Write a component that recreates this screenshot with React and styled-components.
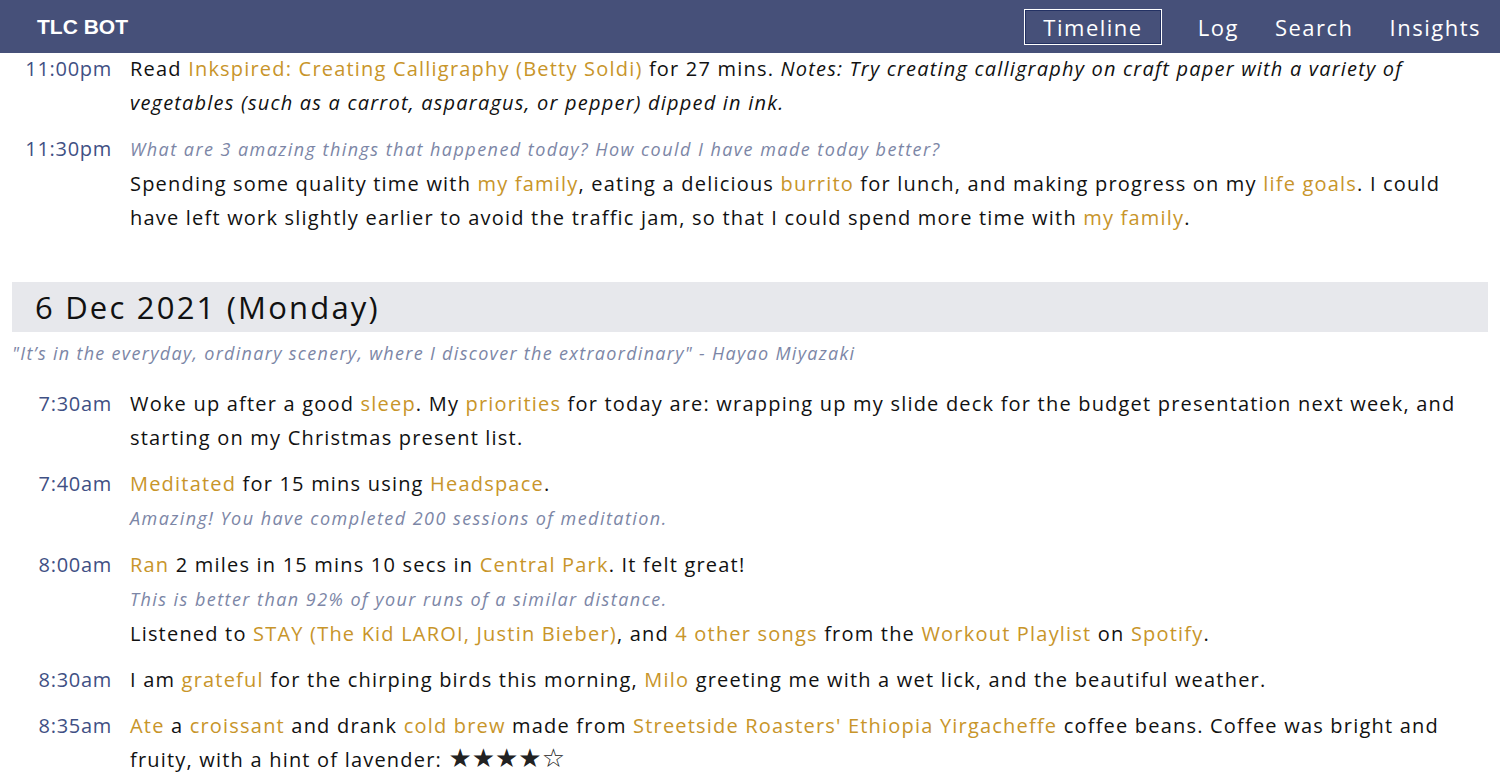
import React from "react";
import styled, { createGlobalStyle } from "styled-components";

const GlobalStyle = createGlobalStyle`
  body {
    margin: 0;
    background: #ffffff;
    font-family: "Open Sans", "Noto Sans", sans-serif;
  }
`;

const Nav = styled.nav`
  height: 53px;
  background: #465079;
  display: flex;
  align-items: center;
  justify-content: space-between;
  padding: 0 19px 0 37px;
`;

const Brand = styled.div`
  font-family: "Liberation Sans", Arial, sans-serif;
  font-weight: bold;
  font-size: 21px;
  color: #ffffff;
  margin-top: 1px;
`;

const Menu = styled.div`
  display: flex;
  align-items: center;
  gap: 36px;
`;

const NavItem = styled.div`
  font-size: 22px;
  letter-spacing: 1.5px;
  color: #ffffff;
  height: 36px;
  box-sizing: border-box;
  display: flex;
  align-items: center;
  padding: ${({ $active }) => ($active ? "0 18px" : "0")};
  border: ${({ $active }) => ($active ? "1px solid #ffffff" : "none")};
  box-shadow: ${({ $active }) => ($active ? "inset 0 0 0 1px #233163" : "none")};
`;

const Page = styled.main`
  padding: 0 12px 40px;
  margin-top: -1px;
`;

const Day = styled.section`
  margin-bottom: 47px;
`;

const DayHeader = styled.h2`
  margin: 0;
  height: 50px;
  display: flex;
  align-items: center;
  padding: 0 23px;
  background: #e7e8ec;
  font-weight: normal;
  font-size: 31px;
  letter-spacing: 2.2px;
  color: #111111;
`;

const Quote = styled.div`
  font-style: italic;
  font-size: 18px;
  letter-spacing: 1.3px;
  line-height: 34px;
  color: #7c86a6;
  margin-top: 4px;
  margin-bottom: 17px;
`;

const Row = styled.div`
  display: grid;
  grid-template-columns: 100px 1fr;
  column-gap: 18px;
  margin-bottom: 12px;
  padding-right: 20px;
`;

const Time = styled.div`
  text-align: right;
  font-size: 20px;
  letter-spacing: 0.7px;
  line-height: 34px;
  color: #3f5084;
`;

const Body = styled.div`
  display: flex;
  flex-direction: column;
`;

const Text = styled.div`
  font-size: 20px;
  letter-spacing: 1.2px;
  line-height: 34px;
  color: #111111;
`;

const Muted = styled.div`
  font-style: italic;
  font-size: 18px;
  letter-spacing: 1.45px;
  line-height: 35px;
  color: #7c86a6;
`;

const Notes = styled.span`
  font-style: italic;
`;

const Accent = styled.span`
  color: #c8952a;
`;

const Stars = styled.span`
  font-family: "DejaVu Sans", sans-serif;
  font-size: 26px;
  letter-spacing: 0;
  line-height: 20px;
  color: #222222;
`;

const L = ({ children }) => <Accent>{children}</Accent>;

const before = [
  {
    time: "11:00pm",
    lines: [
      <>
        Read <L>Inkspired: Creating Calligraphy (Betty Soldi)</L> for 27 mins.{" "}
        <Notes>
          Notes: Try creating calligraphy on craft paper with a variety of
          vegetables (such as a carrot, asparagus, or pepper) dipped in ink.
        </Notes>
      </>,
    ],
  },
  {
    time: "11:30pm",
    prompt:
      "What are 3 amazing things that happened today? How could I have made today better?",
    lines: [
      <>
        Spending some quality time with <L>my family</L>, eating a delicious{" "}
        <L>burrito</L> for lunch, and making progress on my <L>life goals</L>.
        I could have left work slightly earlier to avoid the traffic jam, so
        that I could spend more time with <L>my family</L>.
      </>,
    ],
  },
];

const monday = [
  {
    time: "7:30am",
    lines: [
      <>
        Woke up after a good <L>sleep</L>. My <L>priorities</L> for today are:
        wrapping up my slide deck for the budget presentation next week, and
        starting on my Christmas present list.
      </>,
    ],
  },
  {
    time: "7:40am",
    lines: [
      <>
        <L>Meditated</L> for 15 mins using <L>Headspace</L>.
      </>,
    ],
    note: "Amazing! You have completed 200 sessions of meditation.",
  },
  {
    time: "8:00am",
    lines: [
      <>
        <L>Ran</L> 2 miles in 15 mins 10 secs in <L>Central Park</L>. It felt
        great!
      </>,
    ],
    note: "This is better than 92% of your runs of a similar distance.",
    after: (
      <>
        Listened to <L>STAY (The Kid LAROI, Justin Bieber)</L>, and{" "}
        <L>4 other songs</L> from the <L>Workout Playlist</L> on{" "}
        <L>Spotify</L>.
      </>
    ),
  },
  {
    time: "8:30am",
    lines: [
      <>
        I am <L>grateful</L> for the chirping birds this morning,{" "}
        <L>Milo</L> greeting me with a wet lick, and the beautiful weather.
      </>,
    ],
  },
  {
    time: "8:35am",
    lines: [
      <>
        <L>Ate</L> a <L>croissant</L> and drank <L>cold brew</L> made from{" "}
        <L>Streetside Roasters' Ethiopia Yirgacheffe</L> coffee beans. Coffee
        was bright and fruity, with a hint of lavender:{" "}
        <Stars>★★★★☆</Stars>
      </>,
    ],
  },
];

const Entry = ({ item }) => (
  <Row>
    <Time>{item.time}</Time>
    <Body>
      {item.prompt && <Muted>{item.prompt}</Muted>}
      {item.lines.map((line, i) => (
        <Text key={i}>{line}</Text>
      ))}
      {item.note && <Muted>{item.note}</Muted>}
      {item.after && <Text>{item.after}</Text>}
    </Body>
  </Row>
);

export default function App() {
  return (
    <>
      <GlobalStyle />
      <Nav>
        <Brand>TLC BOT</Brand>
        <Menu>
          <NavItem $active>Timeline</NavItem>
          <NavItem>Log</NavItem>
          <NavItem>Search</NavItem>
          <NavItem>Insights</NavItem>
        </Menu>
      </Nav>
      <Page>
        <Day>
          {before.map((item) => (
            <Entry key={item.time} item={item} />
          ))}
        </Day>
        <Day>
          <DayHeader>6 Dec 2021 (Monday)</DayHeader>
          <Quote>
            "It’s in the everyday, ordinary scenery, where I discover the
            extraordinary" - Hayao Miyazaki
          </Quote>
          {monday.map((item) => (
            <Entry key={item.time} item={item} />
          ))}
        </Day>
      </Page>
    </>
  );
}
